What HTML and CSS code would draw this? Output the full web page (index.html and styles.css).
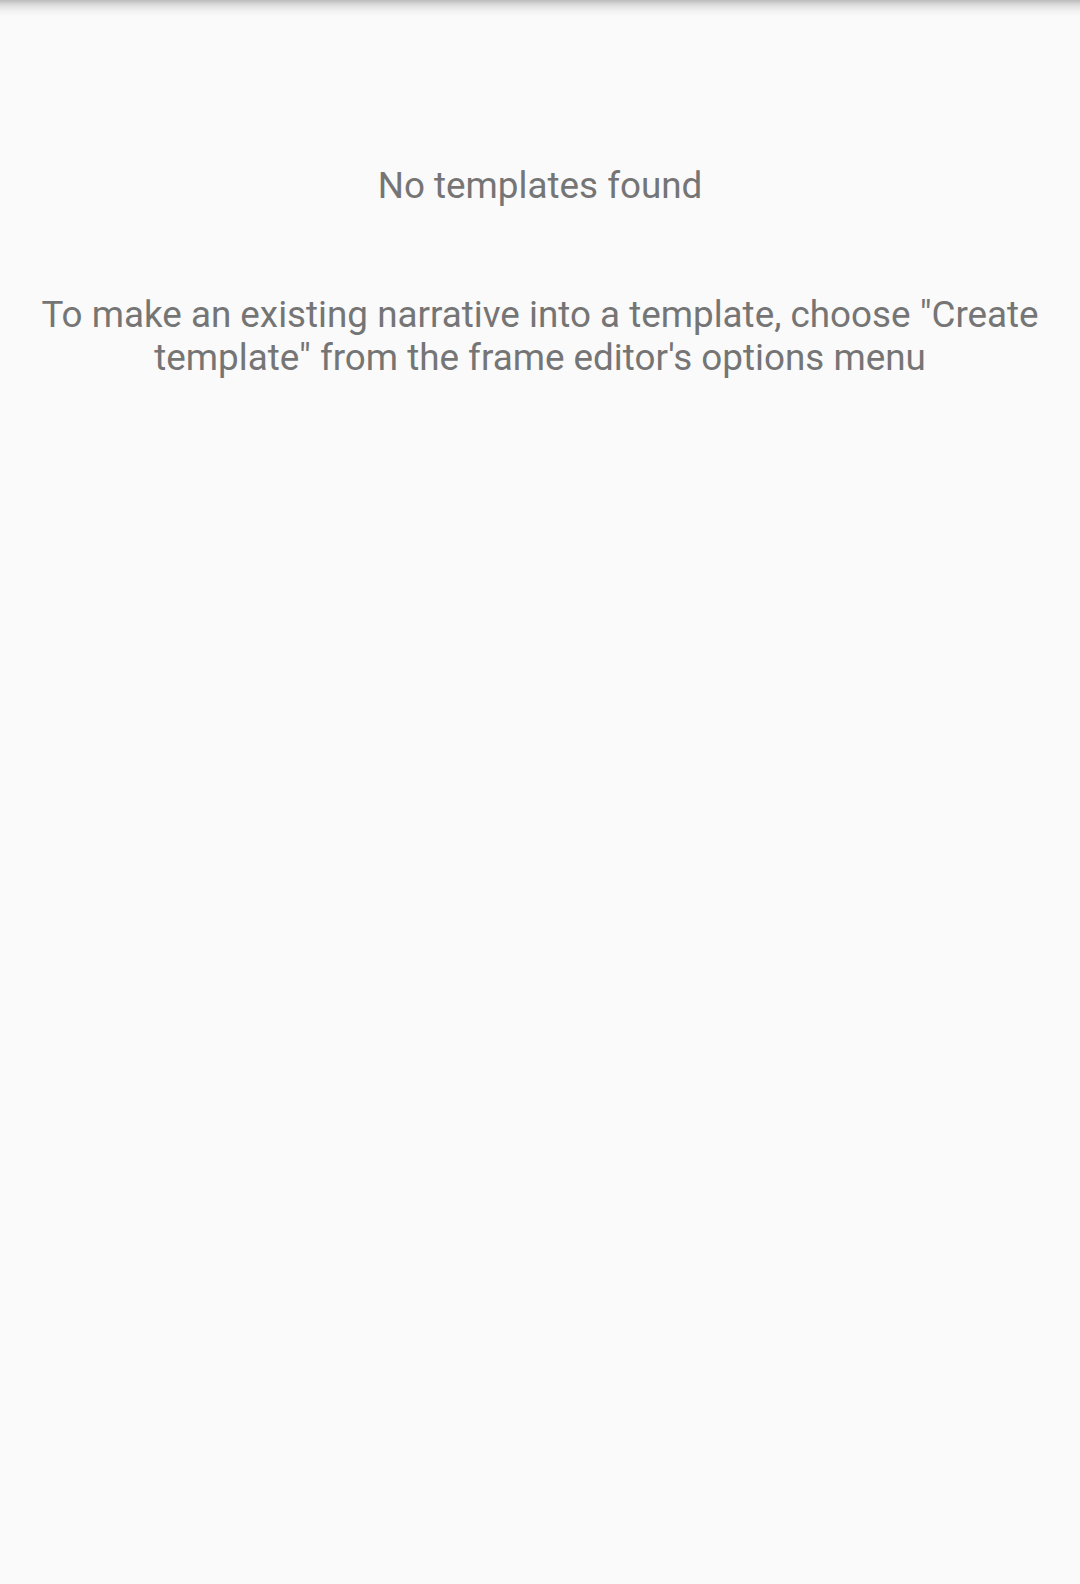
FILE: index.html
```html
<!DOCTYPE html>
<html>
<head>
<meta charset="utf-8">
<link rel="stylesheet" href="styles.css">
</head>
<body>
<div class="shadow"></div>
<main class="empty">
  <h1 class="title">No templates found</h1>
  <p class="hint">To make an existing narrative into a template, choose "Create template" from the frame editor's options menu</p>
</main>
</body>
</html>
```
FILE: styles.css
```css
html, body {
  margin: 0;
  padding: 0;
  background: #fafafa;
  height: 100%;
}
body {
  font-family: Roboto, "Noto Sans", sans-serif;
  color: #757575;
  position: relative;
  overflow: hidden;
}
.shadow {
  position: absolute;
  top: 0;
  left: 0;
  right: 0;
  height: 16px;
  background: linear-gradient(to bottom, rgba(0,0,0,0.25) 0%, rgba(0,0,0,0.12) 30%, rgba(0,0,0,0.03) 70%, rgba(0,0,0,0) 100%);
}
.empty {
  display: flex;
  flex-direction: column;
  align-items: center;
  padding: 0 20px;
}
.title {
  margin: 164px 0 0;
  font-size: 36.8px;
  font-weight: 400;
  line-height: 44px;
  text-align: center;
}
.hint {
  margin: 86px 0 0;
  font-size: 36.8px;
  line-height: 42.5px;
  text-align: center;
}
```
